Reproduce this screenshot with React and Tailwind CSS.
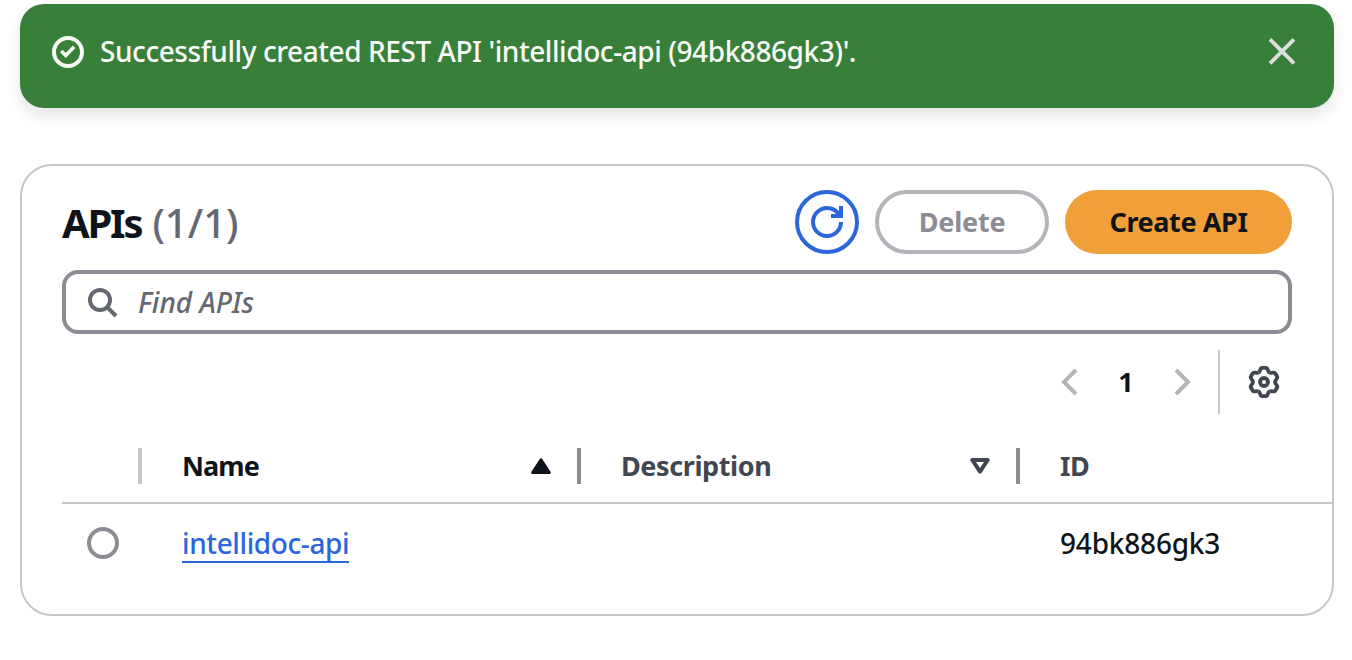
function CheckIcon() {
  return (
    <svg className="size-8 shrink-0" viewBox="0 0 16 16" fill="none" stroke="currentColor" strokeWidth="2">
      <circle cx="8" cy="8" r="7" />
      <path d="M4.6 7.5 6.9 9.7 11.1 5.4" strokeWidth="1.8" />
    </svg>
  );
}

function CloseIcon() {
  return (
    <svg className="size-8 shrink-0" viewBox="0 0 16 16" fill="none" stroke="currentColor" strokeWidth="1.9">
      <path d="m2 1.7 12 12M14 1.7l-12 12" />
    </svg>
  );
}

function RefreshIcon() {
  return (
    <svg className="size-8" viewBox="0 0 16 16" fill="none" stroke="currentColor" strokeWidth="2">
      <path d="M15 8c0 3.87-3.13 7-7 7s-7-3.13-7-7 3.13-7 7-7c2.79 0 5.2 1.63 6.33 4" />
      <path d="M15 0v5h-5" />
    </svg>
  );
}

function SearchIcon() {
  return (
    <svg className="size-8 shrink-0" viewBox="0 0 16 16" fill="none" stroke="currentColor" strokeWidth="2">
      <circle cx="7" cy="7" r="5" />
      <path d="m15 15-4.5-4.5" />
    </svg>
  );
}

function AngleIcon({ right }) {
  return (
    <svg className="size-8" viewBox="0 0 16 16" fill="none" stroke="currentColor" strokeWidth="2">
      <path d={right ? "m5 2 6 6-6 6" : "m11 2-6 6 6 6"} />
    </svg>
  );
}

function SettingsIcon() {
  return (
    <svg className="size-8" viewBox="-8 -8 16 16" fill="none" stroke="currentColor" strokeWidth="1.9" strokeLinejoin="round">
      {[0, 60, 120, 180, 240, 300].map((angle) => (
        <path
          key={angle}
          transform={`rotate(${angle})`}
          d="M-2.75-4.76C-1.7-5.35-2-7.05-1-7.05H1C2-7.05 1.7-5.35 2.75-4.76"
        />
      ))}
      <circle r="2" />
    </svg>
  );
}

function SortAsc() {
  return (
    <svg className="h-4 w-5" viewBox="0 0 20 16" fill="currentColor" stroke="currentColor" strokeWidth="3" strokeLinejoin="round">
      <path d="M10 1.8 18.3 14.5H1.7Z" />
    </svg>
  );
}

function SortNone() {
  return (
    <svg className="h-4 w-5" viewBox="0 0 20 16" fill="none" stroke="currentColor" strokeWidth="4" strokeLinejoin="round">
      <path d="M2.3 2h15.4L10 13.6Z" />
    </svg>
  );
}

export default function App() {
  return (
    <div className="h-[660px] w-[1352px] overflow-hidden bg-white pt-1 pr-[18px] pl-5 font-['Noto_Sans',sans-serif] text-[28px] leading-10 font-medium whitespace-nowrap text-[#0f141a]">
      <div className="flex h-[104px] items-start rounded-3xl bg-[#387f39] pt-8 pr-9 pl-8 text-[#f9f9fa] shadow-[0_8px_16px_rgba(0,7,22,0.1)]">
        <CheckIcon />
        <p className="-mt-[5px] ml-4 tracking-[-0.43px]">Successfully created REST API 'intellidoc-api (94bk886gk3)'.</p>
        <button className="ml-auto text-[#dedee3]" aria-label="Close">
          <CloseIcon />
        </button>
      </div>

      <section className="mt-14 h-[452px] rounded-[32px] border-2 border-[#c6c6cd] pt-6 pl-10">
        <header className="flex h-16 items-center pr-10">
          <h1 className="flex pt-px text-[40px]">
            <span className="font-bold tracking-[-2.2px]">APIs</span>
            <span className="ml-[11px] text-[#656871]">(1/1)</span>
          </h1>
          <div className="ml-auto flex gap-4 text-[27px] font-bold">
            <button className="flex size-16 items-center justify-center rounded-full border-4 border-[#2b67da] text-[#2b67da]" aria-label="Refresh">
              <RefreshIcon />
            </button>
            <button className="h-16 w-[174px] rounded-full border-4 border-[#b4b4bb] tracking-[-0.2px] text-[#8c8c94]">Delete</button>
            <button className="h-16 w-[227px] rounded-full bg-[#f19f39] tracking-[-0.4px]">Create API</button>
          </div>
        </header>

        <div className="mt-4 mr-10 flex h-16 items-center rounded-2xl border-4 border-[#8c8c94] pl-5 text-[#656871]">
          <SearchIcon />
          <span className="ml-5 italic">Find APIs</span>
        </div>

        <div className="mt-4 mr-10 flex h-16 items-center justify-end">
          <span className="text-[#b4b4bb]"><AngleIcon /></span>
          <span className="w-20 text-center text-[27px] font-bold">1</span>
          <span className="text-[#b4b4bb]"><AngleIcon right /></span>
          <span className="ml-5 h-16 w-0.5 bg-[#c6c6cd]" />
          <span className="mr-3 ml-7 text-[#424650]"><SettingsIcon /></span>
        </div>

        <div className="mt-[34px] grid h-14 grid-cols-[80px_439px_439px_1fr] items-start border-b-2 border-[#c6c6cd] text-[27px] font-bold tracking-[-0.4px] text-[#424650]">
          <div className="flex h-9 justify-end"><span className="w-1 bg-[#c6c6cd]" /></div>
          <div className="flex h-9 items-center pl-10 text-[#0f141a]">
            <span className="tracking-[-0.9px]">Name</span>
            <span className="mr-[26px] ml-auto"><SortAsc /></span>
            <span className="h-9 w-1 bg-[#8c8c94]" />
          </div>
          <div className="flex h-9 items-center pl-10">
            Description
            <span className="mr-[26px] ml-auto"><SortNone /></span>
            <span className="h-9 w-1 bg-[#8c8c94]" />
          </div>
          <div className="flex h-9 items-center pl-10">ID</div>
        </div>

        <div className="-mt-px grid h-20 grid-cols-[80px_439px_439px_1fr] items-center">
          <div className="flex pl-[25px]"><span className="size-8 rounded-full border-4 border-[#8c8c94]" /></div>
          <div className="flex pl-10"><a className="mt-0.5 h-[38px] border-b-2 border-[#2b67da] leading-9 tracking-[-0.4px] text-[#2b67da]">intellidoc-api</a></div>
          <div />
          <div className="pl-10 tracking-[-0.2px]">94bk886gk3</div>
        </div>
      </section>
    </div>
  );
}
